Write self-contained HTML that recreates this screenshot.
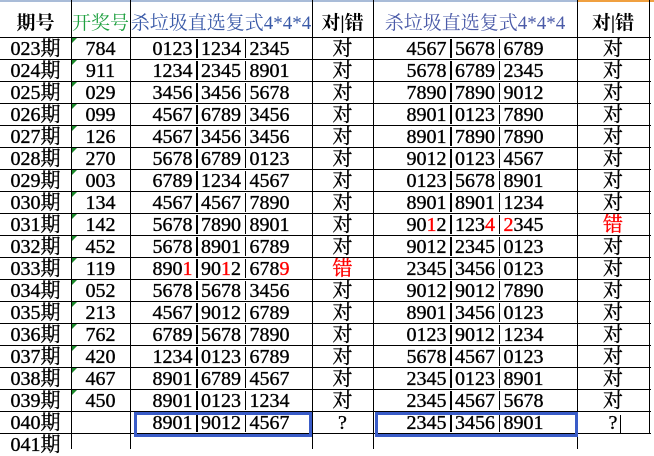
<!DOCTYPE html>
<html><head><meta charset="utf-8"><style>
*{margin:0;padding:0;box-sizing:border-box}
body{width:654px;height:449px;overflow:hidden;background:#fff;position:relative;font-family:"Liberation Serif","Noto Serif CJK SC",serif;color:#000}
.hl{position:absolute;left:0;width:651px;height:1px;background:#000}
.vl{position:absolute;top:0;width:1px;height:449px;background:#000}
.c{position:absolute;text-align:center;font-size:20px;font-weight:normal;-webkit-text-stroke:0.35px currentColor;line-height:22px;white-space:nowrap}
.r{color:#f00}
.b{display:inline-block;width:1.5px;height:19px;background:#000;vertical-align:-3px;margin:0 3.5px}
.tri{position:absolute;width:0;height:0;border-top:5px solid #1a8a2a;border-right:5px solid transparent}
.hd{position:absolute;top:13px;font-size:19px;line-height:22px;font-family:"Liberation Serif","Noto Serif CJK SC",serif;white-space:nowrap;text-align:center}
.box{position:absolute;border:3px solid #3a5cc8}
</style></head><body>
<div style="position:absolute;left:0;top:0;width:578px;height:2px;background:#a9bcd8"></div>
<div style="position:absolute;left:578px;top:0;width:76px;height:2px;background:#f0a040"></div>
<div class="vl" style="left:71px"></div>
<div class="vl" style="left:130px"></div>
<div class="vl" style="left:312px"></div>
<div class="vl" style="left:373px"></div>
<div class="vl" style="left:577px"></div>
<div class="vl" style="left:649px;height:434px"></div>
<div class="hd" style="left:0;width:71px;font-weight:bold">期号</div>
<div class="hd" style="left:71px;width:59px;color:#1fa040">开奖号</div>
<div class="hd" style="left:130px;width:182px;color:#3a5aa8">杀垃圾直选复式4*4*4</div>
<div class="hd" style="left:312px;width:61px;font-weight:bold">对|错</div>
<div class="hd" style="left:373px;width:204px;color:#4a5aa8">杀垃圾直选复式4*4*4</div>
<div class="hd" style="left:577px;width:72px;font-weight:bold">对|错</div>
<div id="rows"></div>
<script>
var d=[
["023","784","0123|1234|2345","对","4567|5678|6789","对"],
["024","911","1234|2345|8901","对","5678|6789|2345","对"],
["025","029","3456|3456|5678","对","7890|7890|9012","对"],
["026","099","4567|6789|3456","对","8901|0123|7890","对"],
["027","126","4567|3456|3456","对","8901|7890|7890","对"],
["028","270","5678|6789|0123","对","9012|0123|4567","对"],
["029","003","6789|1234|4567","对","0123|5678|8901","对"],
["030","134","4567|4567|7890","对","8901|8901|1234","对"],
["031","142","5678|7890|8901","对","90<span class=r>1</span>2|123<span class=r>4</span>|<span class=r>2</span>345","<span class=r>错</span>"],
["032","452","5678|8901|6789","对","9012|2345|0123","对"],
["033","119","890<span class=r>1</span>|90<span class=r>1</span>2|678<span class=r>9</span>","<span class=r>错</span>","2345|3456|0123","对"],
["034","052","5678|5678|3456","对","9012|9012|7890","对"],
["035","213","4567|9012|6789","对","8901|3456|0123","对"],
["036","762","6789|5678|7890","对","0123|9012|1234","对"],
["037","420","1234|0123|6789","对","5678|4567|0123","对"],
["038","467","8901|6789|4567","对","2345|0123|8901","对"],
["039","450","8901|0123|1234","对","2345|4567|5678","对"],
["040","","8901|9012|4567","?","2345|3456|8901","?"],
["041","","","","",""]];
var h='';var L=[0,71,130,312,373,577],W=[71,59,182,61,204,72];
for(var i=0;i<d.length;i++){var t=37+22*i;
h+='<div class="hl" style="top:'+t+'px"></div>';
for(var j=0;j<6;j++){var s=j==0?d[i][0]+'期':d[i][j];s=s.split('|').join('<span class=b></span>');
h+='<div class="c" style="top:'+(t+1)+'px;left:'+L[j]+'px;width:'+W[j]+'px">'+s+'</div>';}
if(i<17)h+='<div class="tri" style="left:72px;top:'+(t+1)+'px"></div>';}
h+='<div class="box" style="left:134px;top:412px;width:178px;height:25px"></div>';
h+='<div class="box" style="left:375px;top:412px;width:203px;height:25px"></div>';
h+='<div style="position:absolute;left:620px;top:415px;width:1px;height:18px;background:#000"></div>';
document.getElementById('rows').innerHTML=h;
</script>
</body></html>
